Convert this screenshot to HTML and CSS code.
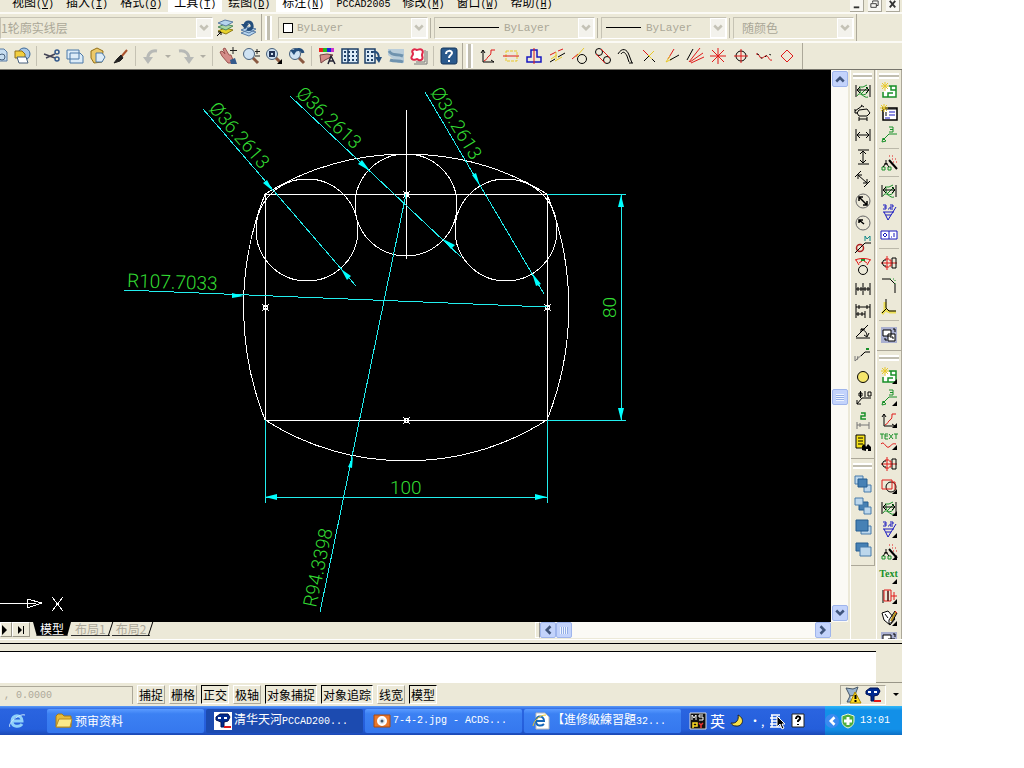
FILE: index.html
```html
<!DOCTYPE html>
<html lang="zh-CN">
<head>
<meta charset="utf-8">
<title>PCCAD2005</title>
<link rel="stylesheet" href="styles.css">
</head>
<body>
<svg class="defs" aria-hidden="true">
  <symbol id="down" viewBox="0 0 8 8"><path d="M1 2l3 3 3-3" fill="none" stroke="currentColor" stroke-width="2"/></symbol>
  <symbol id="gear" viewBox="0 0 18 18"><path class="g" d="M5 5h4l4-2M3 14c3-6 7 3 11 1M6 6c-1 8 7 9 8 2M7 12l7-7"/><path class="k" d="M2 3v12M16 3v12M3 8h12M6 5L3 8l3 3M12 5l3 3-3 3"/></symbol>
  <symbol id="newview" viewBox="0 0 18 18"><path fill="#fff" stroke="none" d="M7 5h9v10H4V9z"/><path class="g" stroke-width="1.500" d="M9 4h7v11H3v-5M11 4v4h5M8 15v-4h5"/><path class="y" d="M5 0v9M1 4h8M2 1l6 6M8 1L2 7"/></symbol>
  <symbol id="leader3" viewBox="0 0 18 18"><path class="g" d="M3 14l6-6h8M2 16l1-4 3 3zM9 1h4v5H9M10 3.500h3"/></symbol>
  <symbol id="wand" viewBox="0 0 18 18"><path class="k" stroke-width="2" d="M9 6l8 9"/><path class="g" d="M2 13h3v3H2zM8 13h3v3H8z"/><path class="k" d="M6 6v3l-3 4M6 9l3 4M4 10h4"/><path class="r" stroke-dasharray="1 2" d="M9 2h6M12 5h4M13 8h4"/></symbol>
  <symbol id="rough" viewBox="0 0 18 18"><path class="b" d="M3 8h11M4 8l4 8 8-13M6 11h5"/><path class="b" d="M3 1h3v4H3M4 3h2M8 5h1M10 1h3v2h-3v2h3"/></symbol>
  <symbol id="shaft" viewBox="0 0 18 18"><path class="r" d="M1 9h16M7 2v14M5 5h4M5 13h4"/><path class="k" d="M6 6H4L2 9l2 3h2M12 4h4v10h-4z"/><path class="r" d="M9 6h2v6H9"/></symbol>
  <symbol id="inner" viewBox="0 0 18 18"><path fill="#aab0d0" stroke="none" d="M1 1h16v16H1z"/><path fill="#fff" stroke="#000" d="M3 4h8v6H3zM8 8h7v7H8z"/><path class="k" d="M5 12v2h2M13 3h2v3M10 11h3v2"/></symbol>
  <symbol id="axis" viewBox="0 0 18 18"><path class="k" d="M4 3v12h11M4 3L2 6M4 3l2 3M15 15l-3-2"/><path class="r" d="M5 14c3-1 3-4 5-5s2-3 2-6h4"/></symbol>
  <symbol id="flag" viewBox="0 0 18 18"><path fill="#000" stroke="none" d="M17 12v5h-5z"/></symbol>
  <symbol id="pccad" viewBox="0 0 18 18"><path fill="#002a90" stroke="#001050" d="M2 5l4-3 8 0 2 3-2 4-4 1v5H7v-5L2 8z"/><path fill="#fff" stroke="none" d="M4 5h3v2H4zM10 5h3v2h-3z"/><path class="r" stroke-width="2" d="M10 15h7"/></symbol>
  <symbol id="mag" viewBox="0 0 18 18"><path stroke="#8a5a42" stroke-width="3" d="M10 10l6 6"/><circle cx="7" cy="7" r="5.500" fill="#cfe2f2" stroke="#48617c"/></symbol>
</svg>

<div class="desktop">
  <header class="chrome">
    <nav class="menubar" aria-label="菜单">
      <button>视图<span class="lt">(<u>V</u>)</span></button>
      <button>插入<span class="lt">(<u>I</u>)</span></button>
      <button>格式<span class="lt">(<u>O</u>)</span></button>
      <button class="hot">工具<span class="lt">(<u>T</u>)</span></button>
      <button>绘图<span class="lt">(<u>D</u>)</span></button>
      <button class="hot">标注<span class="lt">(<u>N</u>)</span></button>
      <button><span class="lt">PCCAD2005</span></button>
      <button>修改<span class="lt">(<u>M</u>)</span></button>
      <button>窗口<span class="lt">(<u>W</u>)</span></button>
      <button>帮助<span class="lt">(<u>H</u>)</span></button>
      <span class="grow"></span>
      <button class="wc" aria-label="最小化"><svg viewBox="0 0 14 12"><path d="M4 8h6" stroke="#333" stroke-width="2"/></svg></button>
      <button class="wc" aria-label="还原"><svg viewBox="0 0 14 12"><path d="M5 3V1h6v5H9M3 4h6v4H3z" stroke="#333" fill="none"/></svg></button>
      <button class="wc" aria-label="关闭"><svg viewBox="0 0 14 12"><path d="M4 1l6 7M10 1L4 8" stroke="#333" stroke-width="2"/></svg></button>
    </nav>

    <div class="bar props">
      <div class="combo layer"><select disabled aria-label="图层"><option>1轮廓实线层</option></select><span class="chev"><svg><use href="#down"/></svg></span></div>
      <button class="tb" aria-label="图层特性"><svg class="i" viewBox="0 0 18 18"><path fill="#e8d22c" stroke="#8d7b18" d="M2 12l7-3 8 2-7 4z"/><path fill="#a9d5a0" stroke="#4c8a5a" d="M2 8l7-3 8 2-7 4z"/><path fill="#b5d4ee" stroke="#5a7ca4" d="M2 4l7-3 8 2-7 4z"/><path class="k" d="M1 17l4-4M2 13h3v3"/></svg></button>
      <button class="tb" aria-label="上一个图层"><svg class="i" viewBox="0 0 18 18"><path fill="#b5d4ee" stroke="#5a7ca4" d="M2 14l7-3 8 2-7 4zM2 11l7-3 8 2-7 4z"/><path stroke="#244e7c" stroke-width="3" d="M8 10c2 1 6 0 5-4s-6-4-7 0"/><path fill="#244e7c" stroke="none" d="M2 5h8l-4 5z"/></svg></button>
      <span class="edge"></span><span class="grip"></span>
      <div class="combo color"><span class="swatch"></span><select class="mono" disabled aria-label="颜色"><option>ByLayer</option></select><span class="chev"><svg><use href="#down"/></svg></span></div>
      <span class="vsep"></span>
      <div class="combo ltype"><span class="line"></span><select class="mono" disabled aria-label="线型"><option>ByLayer</option></select><span class="chev"><svg><use href="#down"/></svg></span></div>
      <span class="vsep"></span>
      <div class="combo lweight"><span class="line short"></span><select class="mono" disabled aria-label="线宽"><option>ByLayer</option></select><span class="chev"><svg><use href="#down"/></svg></span></div>
      <span class="vsep"></span>
      <div class="combo plot"><select disabled aria-label="打印样式"><option>随颜色</option></select><span class="chev"><svg><use href="#down"/></svg></span></div>
      <span class="edge"></span>
    </div>

    <div class="bar tools">
      <button class="tb first" aria-label="打印预览"><svg class="i" viewBox="0 0 18 18"><path fill="#c8def0" stroke="#5a7ca4" d="M6 2h8l3 3v9H6z"/><circle cx="12" cy="10" r="3" stroke="#48617c"/></svg></button>
      <button class="tb" aria-label="发布"><svg class="i" viewBox="0 0 18 18"><circle cx="11" cy="7" r="6" fill="#a9c8e8" stroke="#3e6a9a"/><path fill="#f3cf3e" stroke="#937018" d="M2 4h7l3 3v4H2z"/><path fill="#fff" stroke="#48617c" d="M4 10h9l2 6H6z"/></svg></button>
      <span class="sep"></span>
      <button class="tb" aria-label="剪切"><svg class="i" viewBox="0 0 18 18"><path stroke="#445" stroke-width="1.500" d="M1 7l11 4M3 11l9-4"/><circle cx="14" cy="5" r="2" stroke="#345a8c" stroke-width="1.500"/><circle cx="14" cy="12" r="2" stroke="#345a8c" stroke-width="1.500"/></svg></button>
      <button class="tb" aria-label="复制"><svg class="i" viewBox="0 0 18 18"><path fill="#dcecf8" stroke="#4a78a8" d="M1 3h12v9H1zM4 6h10l3 3v7H4z"/></svg></button>
      <button class="tb" aria-label="粘贴"><svg class="i" viewBox="0 0 18 18"><path fill="#ecc96a" stroke="#937018" d="M2 4l6-3 6 3-1 11-8 1-3-5z"/><path fill="#dcecf8" stroke="#4a78a8" d="M7 6h6l3 4-3 5H7z"/></svg></button>
      <button class="tb" aria-label="特性匹配"><svg class="i" viewBox="0 0 18 18"><path stroke="#a8512c" stroke-width="2" d="M15 3L9 10"/><path fill="#222" stroke="#222" d="M9 8l2 3-3 3-6 2 3-4z"/></svg></button>
      <span class="sep"></span>
      <button class="tb" aria-label="放弃"><svg class="i" viewBox="0 0 18 18"><path stroke="#b7b9b6" stroke-width="3" d="M6 13C5 8 8 3 15 4"/><path fill="#b7b9b6" stroke="none" d="M1 10h10l-5 7z"/></svg></button>
      <button class="mini" aria-label="放弃列表"></button>
      <button class="tb" aria-label="重做"><svg class="i" viewBox="0 0 18 18"><path stroke="#b7b9b6" stroke-width="3" d="M2 4c7-1 10 3 10 8"/><path fill="#b7b9b6" stroke="none" d="M7 10h10l-5 7z"/></svg></button>
      <button class="mini" aria-label="重做列表"></button>
      <span class="sep"></span>
      <button class="tb" aria-label="实时平移"><svg class="i" viewBox="0 0 18 18"><path fill="#d48c88" stroke="#9c5450" d="M1 5l2-1 3 3-2-5 2-1 4 7 2 0 2 5-2 3H9L3 9z"/><path fill="#345a8c" stroke="none" d="M11 13l5-2 2 6h-6z"/><path stroke="#222" d="M14 0v7M11 3.500h7"/></svg></button>
      <button class="tb" aria-label="实时缩放"><svg class="i" viewBox="0 0 18 18"><use href="#mag"/><path stroke="#222" d="M15 2v5M13 4.500h5M13 9h5"/></svg></button>
      <button class="tb" aria-label="窗口缩放"><svg class="i" viewBox="0 0 18 18"><use href="#mag"/><path stroke="#235" stroke-width="2" d="M5 5h4v4H5z"/><use href="#flag"/></svg></button>
      <button class="tb" aria-label="缩放上一个"><svg class="i" viewBox="0 0 18 18"><use href="#mag"/><path fill="#244e7c" stroke="none" d="M2 3h7L6 8z"/><path stroke="#244e7c" stroke-width="3" d="M5 5c4-4 9-3 10 1"/></svg></button>
      <span class="sep"></span>
      <button class="tb" aria-label="特性"><svg class="i" viewBox="0 0 18 18"><path fill="#e22" stroke="none" d="M1 1h4v4H1z"/><path fill="#2b2" stroke="none" d="M5 1h4v4H5z"/><path fill="#22d" stroke="none" d="M9 1h4v4H9z"/><path fill="#c3c" stroke="none" d="M13 1h3v4h-3z"/><path fill="#d48c88" stroke="#744" d="M2 8l7-1 6 1-4 3-4 2-4 3z"/><path stroke="#223" stroke-width="1.500" d="M10 17l3-8 4 8M11 14h5"/></svg></button>
      <button class="tb" aria-label="设计中心"><svg class="i" viewBox="0 0 18 18"><path fill="#dcecf8" stroke="#1e3f66" stroke-width="1.500" d="M1 2h16v14H1zM7 2v14"/><path stroke="#1e3f66" stroke-width="2" stroke-dasharray="2 2" d="M3 5h13M3 9h13M3 13h13"/></svg></button>
      <button class="tb" aria-label="工具选项板"><svg class="i" viewBox="0 0 18 18"><path fill="#dcecf8" stroke="#1e3f66" stroke-width="1.500" d="M1 2h10v14H1z"/><path stroke="#1e3f66" stroke-width="2" stroke-dasharray="2 2" d="M3 5h7M3 9h7M3 13h7"/><path stroke="#244e7c" stroke-width="2" d="M9 5c5-1 6 3 6 7"/><path fill="#244e7c" stroke="none" d="M11 10h7l-3 6z"/></svg></button>
      <button class="tb" aria-label="图纸集"><svg class="i" viewBox="0 0 18 18"><path fill="#b9cdda" stroke="none" d="M1 2h16v14h-6L1 8z"/><path stroke="#6f93ae" stroke-width="3" d="M2 4c4 6 7 2 14 5M3 13c5 2 9 0 13 2"/></svg></button>
      <button class="tb" aria-label="标记集"><svg class="i" viewBox="0 0 18 18"><path stroke="#777" d="M4 17h13V4M6 15h9V3"/><path fill="#fff" stroke="#e0284a" stroke-width="2" d="M3 3c2-2 3 0 4 0s3-2 5 0 0 3 0 5 2 4-1 5-3-1-4-1-3 2-5 0 1-3 1-5-2-2 0-4z"/></svg></button>
      <span class="sep"></span>
      <button class="tb" aria-label="帮助"><svg class="i" viewBox="0 0 18 18"><rect x="1" y="1" width="16" height="16" rx="2" fill="#2b5a8c" stroke="#16365c"/><path stroke="#fff" stroke-width="2" d="M6 7c0-4 6-4 6-1 0 2-3 2-3 5M9 13v2"/></svg></button>
      <span class="edge"></span><span class="grip"></span>
      <button class="tb" aria-label="坐标"><svg class="i" viewBox="0 0 18 18"><use href="#axis"/></svg></button>
      <button class="tb" aria-label="中心线"><svg class="i" viewBox="0 0 18 18"><path class="y" stroke-dasharray="3 1" d="M4 4h11v10H4z"/><path class="r" d="M1 9h16"/></svg></button>
      <button class="tb" aria-label="对称"><svg class="i" viewBox="0 0 18 18"><path class="b" stroke-width="1.500" d="M6 3h6v7h4v5H2v-5h4z"/><path class="r" d="M9 1v16"/></svg></button>
      <button class="tb" aria-label="平行线"><svg class="i" viewBox="0 0 18 18"><path class="r" d="M2 8l6-3M10 4l5-2"/><path class="k" d="M2 15l5-3M10 10l7-4"/><path class="y" d="M3 12l6-4M7 14l7-4M8 5v7"/></svg></button>
      <button class="tb" aria-label="切线"><svg class="i" viewBox="0 0 18 18"><circle class="k" cx="11" cy="12" r="4.500"/><path class="r" d="M1 12l6-5"/><path class="y" d="M5 10l8-9"/></svg></button>
      <button class="tb" aria-label="公切线"><svg class="i" viewBox="0 0 18 18"><circle class="k" cx="5" cy="5" r="3.500"/><circle class="k" cx="13" cy="13" r="3.500"/><path class="r" d="M7 2l9 9M2 7l9 9"/></svg></button>
      <button class="tb" aria-label="双线弧"><svg class="i" viewBox="0 0 18 18"><path class="k" d="M1 7c4-7 9-5 11 1l3 8M4 7c2-3 4-2 6 2l2 6M12 16h4"/></svg></button>
      <button class="tb" aria-label="交叉"><svg class="i" viewBox="0 0 18 18"><path class="r" d="M3 3l5 5"/><path class="y" d="M8 8l4 4M8 10l6-6"/><path class="k" d="M12 12l3 3M4 14l5-5"/></svg></button>
      <button class="tb" aria-label="角平分"><svg class="i" viewBox="0 0 18 18"><path class="r" d="M5 12l6-10"/><path class="y" d="M3 15l4-6M3 15l6-3"/><path class="k" d="M7 13l9-5"/></svg></button>
      <button class="tb" aria-label="等分角"><svg class="i" viewBox="0 0 18 18"><path class="k" d="M1 13L7 2"/><path class="r" d="M3 15L14 1M4 15l13-9M5 16l13-6"/></svg></button>
      <button class="tb" aria-label="放射线"><svg class="i" viewBox="0 0 18 18"><path class="r" d="M9 1v16M1 9h16M3 3l12 12M15 3L3 15"/></svg></button>
      <button class="tb" aria-label="圆心线"><svg class="i" viewBox="0 0 18 18"><circle class="k" cx="9" cy="9" r="5"/><path class="r" d="M9 2v14M2 9h14"/></svg></button>
      <button class="tb" aria-label="波浪线"><svg class="i" viewBox="0 0 18 18"><path class="r" d="M1 7c4-1 3 5 6 4s3-3 5-2 2 5 5 4"/><path class="k" stroke-dasharray="2 3" d="M2 7c3 0 3 5 6 4s5-5 8-3"/></svg></button>
      <button class="tb" aria-label="菱形"><svg class="i" viewBox="0 0 18 18"><path class="r" d="M9 3l6 6-6 6-6-6z"/></svg></button>
      <span class="edge far"></span>
    </div>
  </header>

  <main class="work">
    <section class="canvas">
      <div class="view">
        <svg class="drawing" viewBox="0 70 831 552" role="img" aria-label="图形">
          <g class="w">
            <path d="M265 194H547V420H265z"/>
            <path d="M406 110V259"/>
            <path d="M265 194A269 269 0 0 1 547 194A304 304 0 0 1 547 420A264 264 0 0 1 265 420A308 308 0 0 1 265 194"/>
            <circle cx="307" cy="230" r="51"/><circle cx="406" cy="205" r="51"/><circle cx="506" cy="230" r="51"/>
            <path id="node" d="M263 305h4v4h-4zM262 304l7 7M269 304l-7 7"/>
            <use href="#node" x="282"/><use href="#node" x="141" y="-113"/><use href="#node" x="141" y="113"/>
            <path d="M0 603H27M27 599L42 603L27 608zM27 603H36"/>
            <path d="M52 597L63 611M63 597L52 611"/>
          </g>
          <g class="c">
            <path d="M203 109L356 286M290 96L461 257M425 92L544 294M124 290L547 307M406 194L320 612"/>
            <path d="M547 194H626M547 420H626M621 194V420M265 420V503M547 420V503M265 497H547"/>
          </g>
          <g class="a">
            <path d="M273 191l-10-8 4-3zM341 269l10 7-4 4zM370 171l-12-7 4-4zM443 239l12 6-4 4zM480 186l-8-11 4-2zM532 273l9 11-5 2zM244 296l-12 2v-5zM353 456l-1 12-4-1zM621 195l3 12h-6zM621 420l3-12h-6zM265 497l12-3v6zM547 497l-12-3v6z"/>
          </g>
          <g class="dim">
            <text transform="translate(208 109) rotate(49)">Ø36.2613</text>
            <text transform="translate(295 95) rotate(43)">Ø36.2613</text>
            <text transform="translate(430 92) rotate(59)">Ø36.2613</text>
            <text transform="translate(127 287) rotate(2)">R107.7033</text>
            <text transform="translate(316 608) rotate(-78)">R94.3398</text>
            <text transform="translate(616 318) rotate(-90)">80</text>
            <text x="390" y="494">100</text>
          </g>
        </svg>
        <div class="vscroll"><button class="sb" aria-label="向上滚动"><svg class="flip"><use href="#down"/></svg></button><span class="t1"></span><button class="sb thumb" aria-label="垂直滑块"></button><span class="t2"></span><button class="sb" aria-label="向下滚动"><svg><use href="#down"/></svg></button></div>
      </div>
      <div class="tabs">
        <button class="nav half" aria-label="下一个"><svg viewBox="0 0 10 10"><path d="M1 0v10l5-5z"/></svg></button>
        <button class="nav" aria-label="最后一个"><svg viewBox="0 0 10 10"><path d="M2 1v8l4-4zM7 1h1v8H7z"/></svg></button>
        <button class="tab on">模型</button><button class="tab">布局1</button><button class="tab">布局2</button>
        <span class="grow"></span>
        <div class="hscroll"><span class="split"></span><button class="sb" aria-label="向左滚动"><svg class="left"><use href="#down"/></svg></button><button class="sb thumb h" aria-label="水平滑块"></button><span class="grow"></span><button class="sb" aria-label="向右滚动"><svg class="right"><use href="#down"/></svg></button></div>
      </div>
    </section>

    <aside class="rail">
      <div class="box">
        <span class="hgrip"></span>
        <button class="tb" aria-label="智能标注"><svg class="i" viewBox="0 0 18 18"><use href="#gear"/></svg></button>
        <button class="tb" aria-label="多重标注"><svg class="i" viewBox="0 0 18 18"><path class="k" d="M5 6l8-1 3 4-3 3H5L3 9zM1 7l7-5M1 5v4h3M7 1l3 2M5 13v4M13 13v4M5 15h8"/></svg></button>
        <button class="tb" aria-label="水平标注"><svg class="i" viewBox="0 0 18 18"><path class="k" d="M2 3v12M16 3v12M3 9h12M6 6L3 9l3 3M12 6l3 3-3 3"/></svg></button>
        <button class="tb" aria-label="垂直标注"><svg class="i" viewBox="0 0 18 18"><path class="k" d="M4 2h11M4 16h11M9 3v12M6 6l3-3 3 3M6 12l3 3 3-3"/></svg></button>
        <button class="tb" aria-label="对齐标注"><svg class="i" viewBox="0 0 18 18"><path class="k" d="M1 7l6-6M10 17l6-6M4 5l9 8M4 9V5h4M13 9v4H9"/></svg></button>
        <button class="tb" aria-label="直径标注"><svg class="i" viewBox="0 0 18 18"><circle stroke="#666" cx="9" cy="9" r="7"/><path class="k" stroke-width="1.500" d="M5 5l8 8M5 9V5h4M13 9v4H9"/></svg></button>
        <button class="tb" aria-label="半径标注"><svg class="i" viewBox="0 0 18 18"><circle stroke="#666" cx="9" cy="9" r="7"/><path class="k" stroke-width="1.500" d="M5 6l5 4M5 9V6h4"/></svg></button>
        <button class="tb" aria-label="螺纹标注"><svg class="i" viewBox="0 0 18 18"><circle stroke="#b02020" cx="6" cy="12" r="3.500" stroke-width="1.500"/><path class="k" d="M1 17L11 7h6"/><path stroke="#188" d="M11 5V0l2 3 3-3v5"/></svg></button>
        <button class="tb" aria-label="弧长标注"><svg class="i" viewBox="0 0 18 18"><circle class="k" cx="9" cy="12" r="4.500"/><path class="r" d="M1 2c5-2 11-2 16 0M2 2l3 5M16 2l-3 5M5 5l3-2M13 5l-3-2"/><path class="g" stroke-width="2" d="M7 2h4"/></svg></button>
        <button class="tb" aria-label="连续标注"><svg class="i" viewBox="0 0 18 18"><path class="k" d="M2 3v12M9 3v12M16 3v12M2 9h14M4 7v4M7 7v4M11 7v4M14 7v4"/></svg></button>
        <button class="tb" aria-label="基线标注"><svg class="i" viewBox="0 0 18 18"><path class="k" d="M2 2v14M16 2v14M11 9v7M2 5h14M2 12h9M5 3v4M13 3v4M4 10v4M8 10v4"/></svg></button>
        <button class="tb" aria-label="角度标注"><svg class="i" viewBox="0 0 18 18"><path class="k" d="M2 13L14 1M2 14h14M7 5c4 1 6 4 6 7M7 8V5h4M10 11l3 2 2-4"/></svg></button>
        <button class="tb" aria-label="引线"><svg class="i" viewBox="0 0 18 18"><path stroke="#777" d="M1 10v5l10-9M3 14l1-4"/><path class="k" d="M7 10l4-4h5"/><path class="g" stroke-width="2" d="M12 3h3"/></svg></button>
        <button class="tb" aria-label="圆心标记"><svg class="i" viewBox="0 0 18 18"><circle class="k" cx="9" cy="9" r="5.500" fill="#f5e66c"/></svg></button>
        <button class="tb" aria-label="孔标注"><svg class="i" viewBox="0 0 18 18"><path class="k" d="M3 14l5-6h9M3 10v4h4M5 3h3v3H5zM6.500 1v7M11 1v6M14 2h3v4h-3z"/></svg></button>
        <button class="tb" aria-label="坐标标注"><svg class="i" viewBox="0 0 18 18"><path class="g" stroke-width="1.500" d="M7 1h4v3H7v3h5"/><path stroke="#777" d="M3 10v7M15 10v7M3 13h12M6 11v4"/></svg></button>
        <button class="tb" aria-label="查找"><svg class="i" viewBox="0 0 18 18"><path fill="#f6e21a" stroke="#000" d="M2 1h9v13H2z"/><path class="k" d="M4 4h5M4 7h5M4 10h5"/><path fill="#000" stroke="none" d="M8 16v-4l2-2 2 3 2-3 3 3v4h-3v-2h-2v2z"/></svg></button>
      </div>
      <div class="box">
        <span class="hgrip"></span>
        <button class="tb" aria-label="前置"><svg class="i" viewBox="0 0 18 18"><path fill="#bcd7ec" stroke="#477baa" d="M1 1h8v8H1zM10 10h7v7h-7z"/><path fill="#4681b5" stroke="#245d90" d="M4 4h9v8H4z"/></svg></button>
        <button class="tb" aria-label="后置"><svg class="i" viewBox="0 0 18 18"><path fill="#4681b5" stroke="#245d90" d="M5 5h9v8H5z"/><path fill="#bcd7ec" stroke="#477baa" d="M1 1h8v7H1zM10 10h7v7h-7z"/></svg></button>
        <button class="tb" aria-label="置于对象之上"><svg class="i" viewBox="0 0 18 18"><path fill="#bcd7ec" stroke="#477baa" d="M7 7h10v8H7z"/><path fill="#4681b5" stroke="#245d90" d="M2 1h12v11H2z"/></svg></button>
        <button class="tb" aria-label="置于对象之下"><svg class="i" viewBox="0 0 18 18"><path fill="#4681b5" stroke="#245d90" d="M2 2h12v8H2z"/><path fill="#bcd7ec" stroke="#477baa" d="M6 6h11v9H6z"/></svg></button>
      </div>
    </aside>

    <aside class="rail second">
      <div class="box">
        <span class="hgrip"></span>
        <button class="tb" aria-label="新建视图"><svg class="i" viewBox="0 0 18 18"><use href="#newview"/></svg></button>
        <button class="tb" aria-label="明细表"><svg class="i" viewBox="0 0 18 18"><path class="k" fill="#fff" stroke-width="1.500" d="M3 4h14v12H3z"/><path class="b" d="M9 8h6M9 11h6M5 14h5"/><path class="k" d="M3 5h14M6 8v4"/><path class="y" d="M4 0v8M0 4h8M1 1l6 6M7 1L1 7"/></svg></button>
        <button class="tb" aria-label="序号"><svg class="i" viewBox="0 0 18 18"><use href="#leader3"/></svg></button>
        <span class="hsep"></span>
        <button class="tb" aria-label="工具"><svg class="i" viewBox="0 0 18 18"><use href="#wand"/></svg></button>
        <span class="hsep"></span>
        <button class="tb" aria-label="标注"><svg class="i" viewBox="0 0 18 18"><use href="#gear"/></svg></button>
        <button class="tb" aria-label="粗糙度"><svg class="i" viewBox="0 0 18 18"><use href="#rough"/></svg></button>
        <button class="tb" aria-label="形位公差"><svg class="i" viewBox="0 0 18 18"><path class="b" fill="#fff" d="M1 5h16v8H1zM9 5v8M5 7l2 2-2 2-2-2zM14 7v4M11 11h1"/></svg></button>
        <span class="hsep"></span>
        <button class="tb" aria-label="轴"><svg class="i" viewBox="0 0 18 18"><use href="#shaft"/></svg></button>
        <button class="tb" aria-label="倒角"><svg class="i" viewBox="0 0 18 18"><path class="k" d="M2 3h8l5 5v9"/><path class="g" stroke-dasharray="1 2" d="M10 3h5v5"/></svg></button>
        <button class="tb" aria-label="圆角"><svg class="i" viewBox="0 0 18 18"><path stroke="#ecdf55" stroke-width="3" d="M5 4v8l5 2h6M6 11l-4 5"/><path class="k" d="M6 1v9l3 3h7M6 11l-4 4"/></svg></button>
        <span class="hsep"></span>
        <button class="tb" aria-label="图库"><svg class="i" viewBox="0 0 18 18"><use href="#inner"/></svg></button>
      </div>
      <div class="box open">
        <span class="hgrip"></span>
        <button class="tb" aria-label="视图组"><svg class="i" viewBox="0 0 18 18"><use href="#newview"/><use href="#flag"/></svg></button>
        <button class="tb" aria-label="序号组"><svg class="i" viewBox="0 0 18 18"><use href="#leader3"/><use href="#flag"/></svg></button>
        <button class="tb" aria-label="曲线组"><svg class="i" viewBox="0 0 18 18"><use href="#axis"/><use href="#flag"/></svg></button>
        <button class="tb" aria-label="文字曲线"><svg class="i" viewBox="0 0 18 18"><path class="g" d="M0 1h4M2 1v5M8 1H5v5h3M5 3h3M9 1l4 5M13 1L9 6M14 1h4M16 1v5"/><path class="r" d="M1 11c3-4 5 5 8 3s3-4 7-3"/><use href="#flag"/></svg></button>
        <button class="tb" aria-label="轴组"><svg class="i" viewBox="0 0 18 18"><use href="#shaft"/></svg></button>
        <button class="tb" aria-label="剖面组"><svg class="i" viewBox="0 0 18 18"><circle class="k" cx="11" cy="10" r="5"/><path class="r" d="M2 3h10v9H2zM12 5h3v8"/><use href="#flag"/></svg></button>
        <button class="tb" aria-label="标注组"><svg class="i" viewBox="0 0 18 18"><use href="#gear"/><use href="#flag"/></svg></button>
        <button class="tb" aria-label="粗糙度组"><svg class="i" viewBox="0 0 18 18"><use href="#rough"/><use href="#flag"/></svg></button>
        <button class="tb" aria-label="工具组"><svg class="i" viewBox="0 0 18 18"><use href="#wand"/><use href="#flag"/></svg></button>
        <button class="tb txt">Text<svg class="i corner" viewBox="0 0 18 18"><use href="#flag"/></svg></button>
        <button class="tb" aria-label="零件组"><svg class="i" viewBox="0 0 18 18"><path class="k" d="M3 16V3"/><path class="r" d="M4 3h7v11H4zM8 3v11M11 9h6M14 5v8"/><path class="k" d="M8 4v10"/><use href="#flag"/></svg></button>
        <button class="tb" aria-label="编辑组"><svg class="i" viewBox="0 0 18 18"><path class="k" fill="#fff" d="M2 4l6-2 7 8-5 6-6-5z"/><path class="k" d="M5 5l3 4"/><path stroke="#b8901c" stroke-width="2" d="M16 3l-5 9"/><path class="k" d="M15 2l-6 9v4l3-2 5-9"/><path class="r" d="M15 2l2 2"/><use href="#flag"/></svg></button>
        <button class="tb" aria-label="图库组"><svg class="i" viewBox="0 0 18 18"><use href="#inner"/></svg></button>
      </div>
    </aside>
  </main>

  <section class="command"><textarea aria-label="命令行"></textarea></section>

  <section class="status">
    <div class="coords mono">, 0.0000</div>
    <button>捕捉</button><button>栅格</button><button class="in">正交</button><button>极轴</button><button class="in">对象捕捉</button><button class="in">对象追踪</button><button>线宽</button><button class="in">模型</button>
    <span class="grow"></span>
    <div class="tray"><svg class="i" viewBox="0 0 18 18"><path fill="#9ab4cf" stroke="#456" d="M2 2l7 1 5-2-3 8-5 1zM6 10l-3 6h6"/><path fill="#fd2" stroke="#a80" d="M11 6l6 11H6z"/><path class="k" stroke-width="2" d="M11.500 9v4M11.500 14v2"/></svg><svg class="i" viewBox="0 0 18 18"><use href="#pccad"/></svg></div>
    <button class="more" aria-label="状态栏菜单"></button>
  </section>

  <footer class="taskbar">
    <a class="quick" href="#" aria-label="Internet Explorer"><svg class="i" viewBox="0 0 18 18"><path stroke="#8fd0fa" stroke-width="3" d="M4 9h10c0-7-10-7-10 0s8 6 10 3"/><path stroke="#cdeafc" d="M2 15c-3-3 9-14 15-12"/></svg></a>
    <button class="task"><svg class="i" viewBox="0 0 18 18"><path fill="#e6bb3c" stroke="#a57a18" d="M1 4l2-2h4l2 2h7v11H1z"/><path fill="#fce98a" stroke="#b98d22" d="M1 15L4 7h13l-2 8z"/></svg><span>预审资料</span></button>
    <button class="task active"><svg class="i" viewBox="0 0 18 18"><path fill="#fff" stroke="none" d="M0 0h18v18H0z"/><use href="#pccad"/></svg><span>清华天河<span class="lt">PCCAD200...</span></span></button>
    <button class="task"><svg class="i" viewBox="0 0 18 18"><path fill="#e9772a" stroke="#a84a10" d="M1 3h16v12H1z"/><circle cx="9" cy="9" r="4" fill="#dfe8ee" stroke="#fff" stroke-width="2"/><circle cx="9" cy="9" r="1.500" fill="#456" stroke="none"/></svg><span class="lt">7-4-2.jpg - ACDS...</span></button>
    <button class="task"><svg class="i" viewBox="0 0 18 18"><path fill="#fff" stroke="#bbb" d="M4 1h9l4 4v12H4z"/><path stroke="#1666b8" stroke-width="2" d="M4 9h8c0-6-8-6-8 0s6 5 8 3"/><path class="y" d="M1 14C2 8 8 3 14 3"/></svg><span>【進修級練習題<span class="lt">32...</span></span></button>
    <span class="grow"></span>
    <div class="lang">
      <svg class="i" viewBox="0 0 18 18"><path fill="#111" stroke="#ddd" d="M1 1h16v16H1z"/><path stroke="#fff" d="M3 8V3l2 3 2-3v5M14 3h-4v2h4v3h-4"/><path stroke="#fd2" stroke-width="1.500" d="M4 16v-5h4v3H4"/><path stroke="#e33" stroke-width="1.500" d="M10 11l2 2 2-2M12 13v3"/></svg>
      <b>英</b>
      <svg class="i" viewBox="0 0 18 18"><path fill="#fbe24a" stroke="#222" d="M10 3c8 4 4 12-2 11-4 0-5-3-5-3 6 1 8-4 7-8z"/></svg>
      <span class="punc">•,</span>
      <svg class="i" viewBox="0 0 18 18"><path stroke="#fff" stroke-width="1.500" d="M3 3h9M2 6h10M3 9h9M2 12h10M2 15h11M4 3v12"/><path fill="#000" stroke="#fff" d="M9 4v11l3-3 2 5 2-1-2-4h3z"/></svg>
      <svg class="i" viewBox="0 0 18 18"><path fill="#fff" stroke="#222" d="M3 2h12v13H3z"/><path class="k" stroke-width="2" d="M7 7c0-4 5-3 4 0l-2 2v1M9 12v1"/></svg>
    </div>
    <div class="clock"><button class="collapse" aria-label="隐藏图标"><svg class="left"><use href="#down"/></svg></button><svg class="i" viewBox="0 0 18 18"><path fill="#4fae3c" stroke="#e8f6d8" d="M9 2l6 2v5c0 4-3 6-6 7-3-1-6-3-6-7V4z"/><path stroke="#fff" stroke-width="3" d="M9 5v8M5 9h8"/></svg><time class="lt">13:01</time></div>
  </footer>
</div>
</body>
</html>
```

FILE: styles.css
```css
* { box-sizing: border-box; }
body {
  margin: 0;
  height: 100vh;
  padding: 0 122px 33px 0;
  background: #fff;
  font: 12px/14px "Noto Sans CJK SC", sans-serif;
  color: #000;
  overflow: hidden;
}
button, select, textarea { font: inherit; color: inherit; margin: 0; padding: 0; border: 0; background: none; border-radius: 0; }
.defs { display: none; }
.desktop { height: 100%; display: flex; flex-direction: column; background: #ece9d8; overflow: hidden; }
.grow { flex: 1; }
.lt, .mono { font-family: "Liberation Mono", monospace; font-size: 10px; }
.i { width: 18px; height: 18px; flex: none; display: block; fill: none; stroke: currentColor; }
.k { stroke: #000; }
.r { stroke: #e01818; }
.g { stroke: #189028; }
.b { stroke: #1818c0; }
.y { stroke: #e8c828; }

.menubar { height: 12px; display: flex; align-items: flex-end; padding-left: 6px; }
.menubar button { padding: 0 6px; height: 17px; line-height: 12px; flex: none; white-space: nowrap; }
.menubar .hot { background: #fff; }
.menubar .wc { width: 14px; height: 12px; padding: 0; margin-right: 4px; background: #f8f7f2; border-right: 1px solid #aaa799; border-bottom: 1px solid #aaa799; }
.menubar .wc:last-child { margin-right: 2px; }
.wc svg { display: block; width: 13px; height: 11px; }

.bar { display: flex; align-items: center; overflow: hidden; border-top: 2px solid #fbfaf5; height: 29px; }
.tools { height: 28px; }
.combo { height: 22px; display: flex; align-items: center; flex: none; border: 1px solid #c6c3b4; border-right-color: #fff; border-bottom-color: #fff; }
.combo select { flex: 1; min-width: 0; appearance: none; color: #aaa797; opacity: 1; }
.combo .mono { font-size: 11px; }
.chev { width: 16px; height: 20px; display: grid; place-items: center; background: #f3f2ec; border: 1px solid #fff; color: #c4c2b6; }
.chev svg { width: 10px; height: 10px; }
.layer { width: 213px; }
.color { width: 150px; margin-left: 3px; }
.ltype { width: 161px; }
.lweight { width: 126px; }
.plot { width: 121px; padding-left: 8px; }
.swatch { width: 10px; height: 10px; border: 1px solid #000; background: #fff; margin: 0 4px; }
.line { width: 60px; height: 1px; background: #000; margin: 0 5px 0 4px; }
.line.short { width: 35px; }
.vsep { width: 1px; height: 20px; margin: 0 3px 0 2px; background: #b5b2a3; }
.edge { width: 1px; align-self: stretch; background: #aca899; margin-left: 2px; }
.edge.far { margin-left: 4px; }
.grip { width: 7px; height: 24px; margin: 0 3px; border: solid #fff; border-width: 0 2px; background: #c1beb0; }
.tb { width: 23px; height: 22px; display: grid; place-items: center; flex: none; position: relative; }
.sep { width: 1px; height: 20px; margin: 0 3px; background: #c5c2b3; flex: none; }
.tools .first { margin-left: -13px; }
.mini { width: 12px; height: 22px; display: grid; place-items: center; }
.mini::after, .more::after { content: ""; border: 3px solid transparent; border-top-color: #b0aea4; border-bottom: 0; }

.work { flex: 1; min-height: 0; display: flex; border-top: 1px solid #77756c; overflow: hidden; }
.canvas { flex: 1; min-width: 0; display: flex; flex-direction: column; }
.view { flex: 1; min-height: 0; display: flex; }
.drawing { flex: 1; min-width: 0; height: 100%; background: #000; }
.w, .c { fill: none; stroke: #fff; shape-rendering: crispEdges; }
.c { stroke: #2ee; }
.a { fill: #0ff; }
.dim { fill: #3d3; font-family: Roboto, sans-serif; font-size: 19px; font-weight: 300; }
.vscroll { width: 17px; display: flex; flex-direction: column; align-items: flex-end; background: #fbfaf5; padding: 1px 0; }
.t1 { flex: 303; }
.t2 { flex: 200; }
.sb { width: 16px; height: 16px; flex: none; display: grid; place-items: center; background: #c3d3fb; border: 1px solid #9fb5ec; border-radius: 2px; color: #40557c; }
.sb svg { width: 10px; height: 10px; }
.flip { transform: rotate(180deg); }
.left { transform: rotate(90deg); }
.right { transform: rotate(-90deg); }
.thumb::after { content: ""; width: 8px; height: 7px; background: repeating-linear-gradient(#eef4fe 0 1px, #93aee6 1px 2px); }
.thumb.h::after { background: repeating-linear-gradient(90deg, #eef4fe 0 1px, #93aee6 1px 2px); }

.tabs { height: 17px; display: flex; align-items: flex-start; }
.nav { width: 18px; height: 15px; display: grid; place-items: center; border: 1px solid #fff; border-right-color: #999688; border-bottom-color: #999688; }
.nav.half { width: 12px; }
.nav svg { width: 10px; height: 10px; }
.tab { height: 14px; padding: 0 4px; line-height: 12px; color: #aca899; position: relative; border-bottom: 1px solid #333; margin-right: 2px; }
.tab::after { content: ""; position: absolute; right: -1px; top: 0; width: 1px; height: 14px; background: #000; transform: skewX(-18deg); }
.tab.on { padding: 0 7px; margin: 0 0 0 3px; background: #000; color: #fff; clip-path: polygon(0 0, 100% 0, 90% 100%, 10% 100%); }
.hscroll { flex: 0 0 296px; display: flex; height: 16px; margin-right: 17px; background: #fbfaf5; }
.split { width: 5px; background: #ece9d8; border: 1px solid #fff; border-right-color: #999; }

.rail { width: 25px; margin-left: 2px; display: flex; flex-direction: column; overflow: hidden; border-left: 1px solid #fff; }
.rail.second { width: 26px; margin-left: 1px; }
.box { flex: none; display: flex; flex-direction: column; padding-bottom: 4px; border-right: 1px solid #aca899; border-bottom: 1px solid #aca899; }
.hgrip { height: 6px; margin: 3px 2px 1px; border: solid #fff; border-width: 2px 0; background: #c1beb0; }
.box + .box .hgrip { margin: 4px 2px; }
.hsep { height: 1px; margin: 2px 2px 3px; background: #bbb8a9; }
.txt { font: bold 10px/14px "Liberation Serif", serif; color: #189028; }
.corner { position: absolute; right: 2px; bottom: 0; }

.command { height: 44px; padding: 4px 0 0; border-top: 1px solid #fff; border-bottom: 1px solid #999688; }
.command textarea { display: block; width: calc(100% - 26px); height: 32px; resize: none; background: #fff; border-top: 1px solid #000; outline: 0; }
.command::before { content: ""; display: block; height: 7px; margin-top: -1px; border-top: 1px solid #000; }
.status { height: 23px; display: flex; align-items: center; gap: 4px; overflow: hidden; }
.coords { width: 133px; height: 18px; padding-left: 4px; line-height: 17px; color: #aca899; border: solid #aca899; border-width: 1px 1px 0 0; }
.status button { height: 19px; padding: 0 1px; line-height: 17px; border: 1px solid #fff; border-right-color: #aca899; border-bottom-color: #aca899; }
.status .in { border-color: #000 #fff #fff #000; }
.tray { display: flex; gap: 2px; padding: 0 3px; border: 1px solid #aca899; border-right-color: #fff; border-bottom-color: #fff; }
.status .more { width: 12px; border: 0; display: grid; place-items: center; }
.more::after { border-top-color: #000; }

.taskbar { height: 29px; display: flex; align-items: center; gap: 2px; overflow: hidden; color: #fff; background: linear-gradient(#5c9cf8, #2a64e0 12%, #245edb 80%, #1c49b4); }
.quick { width: 45px; padding-left: 8px; color: #fff; }
.task { flex: 0 1 157px; min-width: 0; height: 24px; display: flex; align-items: center; gap: 2px; padding: 0 8px; white-space: nowrap; overflow: hidden; border-radius: 2px; background: linear-gradient(#5a9bff, #3c81f3 20%, #3577ee); }
.task.active { background: #1c4bb0; }
.lang { display: flex; align-items: center; gap: 3px; padding-right: 16px; }
.lang b { font-size: 15px; line-height: 20px; font-weight: 400; }
.punc { width: 16px; }
.clock { width: 77px; align-self: stretch; display: flex; align-items: center; background: linear-gradient(#30b8f8, #1290e8 15%, #1290e8 80%, #0d6fc4); }
.clock time { margin-left: 3px; }
.collapse { width: 14px; height: 14px; border-radius: 50%; background: #3a8af0; display: grid; place-items: center; color: #fff; }
.collapse svg { width: 10px; height: 10px; }
```
